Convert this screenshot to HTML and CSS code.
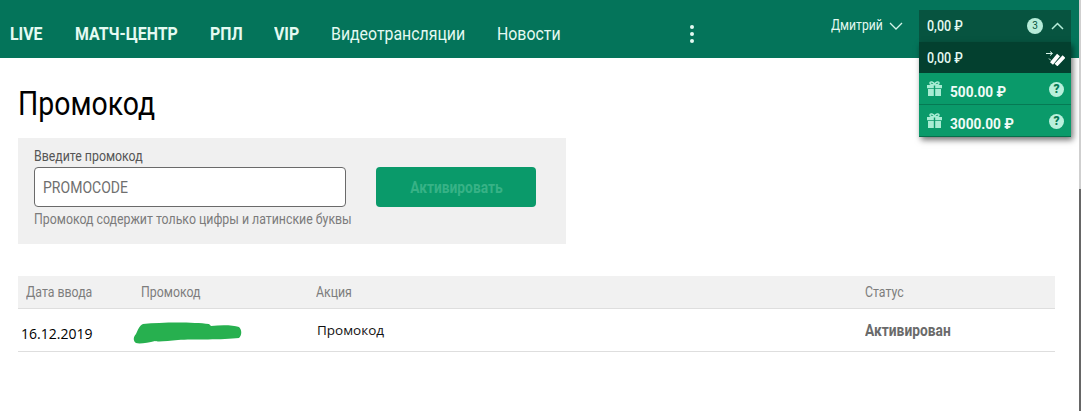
FILE: index.html
```html
<!DOCTYPE html>
<html lang="ru">
<head>
<meta charset="utf-8">
<title>Промокод</title>
<link rel="stylesheet" href="styles.css">
</head>
<body>
<div class="scroll-strip"><div class="scroll-thumb"></div></div>
<header class="topbar">
  <nav class="nav">
    <a class="nav-item strong"><span class="cond">LIVE</span></a>
    <a class="nav-item strong"><span class="cond">МАТЧ-ЦЕНТР</span></a>
    <a class="nav-item strong"><span class="cond">РПЛ</span></a>
    <a class="nav-item strong"><span class="cond">VIP</span></a>
    <a class="nav-item"><span class="cond">Видеотрансляции</span></a>
    <a class="nav-item"><span class="cond">Новости</span></a>
    <span class="dots"><i></i><i></i><i></i></span>
  </nav>
  <div class="user"><span class="cond">Дмитрий</span>
    <svg class="chev" width="14" height="8" viewBox="0 0 14 8"><path d="M1 1l6 6 6-6" fill="none" stroke="#d5f5ea" stroke-width="1.300"/></svg>
  </div>
  <div class="wallet">
    <div class="wallet-head">
      <span class="cond">0,00 ₽</span>
      <span class="badge">3</span>
      <svg class="chev-up" width="13" height="8" viewBox="0 0 13 8"><path d="M1 7l5.500-5.500L12 7" fill="none" stroke="#b6ecd9" stroke-width="1.500"/></svg>
    </div>
    <div class="wallet-menu">
      <div class="wallet-row dark">
        <span class="cond">0,00 ₽</span>
        <svg class="transfer" width="19" height="16" viewBox="0 0 19 16"><path d="M0 3.500h6M4 1.500l2.500 2-2.500 2M3 8.500l2 2" fill="none" stroke="#d8f5ea" stroke-width="1"/><path d="M5.500 13.500L12.500 5M10 15L18 6.500" fill="none" stroke="#fff" stroke-width="3.800"/></svg>
      </div>
      <div class="wallet-row bonus">
        <svg class="gift" width="15" height="15" viewBox="0 0 15 15"><path d="M0 4h6.800v3.200H0zM8.200 4H15v3.200H8.200zM1 8h5.800v7H1zM8.200 8H14v7H8.200z" fill="#a8ecd3"/><path d="M7.500 3.800C5 3.800 3 3.200 3 1.900 3 .4 6.500.5 7.500 3.800zM7.500 3.800C10 3.800 12 3.200 12 1.900 12 .4 8.500.5 7.500 3.800z" fill="none" stroke="#a8ecd3" stroke-width="1.500"/></svg>
        <b class="amount"><span class="cond wide">500.00 ₽</span></b>
        <span class="help">?</span>
      </div>
      <div class="wallet-row bonus">
        <svg class="gift" width="15" height="15" viewBox="0 0 15 15"><path d="M0 4h6.800v3.200H0zM8.200 4H15v3.200H8.200zM1 8h5.800v7H1zM8.200 8H14v7H8.200z" fill="#a8ecd3"/><path d="M7.500 3.800C5 3.800 3 3.200 3 1.900 3 .4 6.500.5 7.500 3.800zM7.500 3.800C10 3.800 12 3.200 12 1.900 12 .4 8.500.5 7.500 3.800z" fill="none" stroke="#a8ecd3" stroke-width="1.500"/></svg>
        <b class="amount"><span class="cond wide">3000.00 ₽</span></b>
        <span class="help">?</span>
      </div>
    </div>
  </div>
</header>
<main class="page">
  <h1 class="title"><span class="cond">Промокод</span></h1>
  <section class="promo">
    <div class="promo-field">
      <label class="promo-label"><span class="cond">Введите промокод</span></label>
      <div class="input"><span class="cond">PROMOCODE</span></div>
      <p class="hint"><span class="cond">Промокод содержит только цифры и латинские буквы</span></p>
    </div>
    <button class="activate"><span class="cond">Активировать</span></button>
  </section>
  <div class="table">
    <div class="tr th">
      <div class="c1"><span class="cond">Дата ввода</span></div>
      <div class="c2"><span class="cond">Промокод</span></div>
      <div class="c3"><span class="cond">Акция</span></div>
      <div class="c4"><span class="cond">Статус</span></div>
    </div>
    <div class="tr td">
      <div class="c1 date">16.12.2019</div>
      <div class="c2"><svg class="redact" width="110" height="22" viewBox="0 0 110 22"><path d="M10 2C30 0 60 0 76 2l2 2C88 3 100 3 106 5c3 3 3 8 0 11-16 2-46 1-61 2-10 1-20 2-23 1-7 2-16 3-19 2-3-2-3-6 0-9C5 8 6 4 10 2z" fill="#27b04f"/></svg></div>
      <div class="c3 action">Промокод</div>
      <div class="c4 status"><span class="cond">Активирован</span></div>
    </div>
  </div>
</main>
</body>
</html>
```
FILE: styles.css
```css
html, body { margin: 0; padding: 0; }
body { width: 1081px; height: 411px; overflow: hidden; background: #fff; font-family: Roboto, "Liberation Sans", sans-serif; color: #000; position: relative; }
.cond { display: inline-block; transform: scaleX(.835); transform-origin: left center; white-space: nowrap; }
.cond.wide { transform: scaleX(.91); }
.hint .cond, .promo-label .cond, .th .cond, .input .cond { transform: scaleX(.85); }

.topbar { height: 58px; background: #04745a; display: flex; align-items: flex-start; color: #e4faf2; }
.nav { display: flex; align-items: center; height: 67px; padding-left: 10px; flex: 0 0 806px; box-sizing: border-box; font-size: 19px; }
.nav-item { color: #e4faf2; }
.nav-item:nth-child(1) { width: 65px; }
.nav-item:nth-child(2) { width: 135px; }
.nav-item:nth-child(3) { width: 64px; }
.nav-item:nth-child(4) { width: 57px; }
.nav-item:nth-child(5) { width: 166px; }
.nav-item:nth-child(6) { width: 193px; }
.strong { font-weight: 700; }
.dots { display: flex; flex-direction: column; gap: 3px; }
.dots i { width: 4px; height: 4px; border-radius: 50%; background: #e4faf2; display: block; }

.user { width: 113px; height: 50px; box-sizing: border-box; padding: 17px 0 0 25px; font-size: 14.500px; display: flex; align-items: flex-start; }
.user .cond { width: 58px; }
.chev { margin-top: 5px; }

.wallet { width: 152px; position: relative; }
.wallet-head { margin-top: 10px; height: 32px; background: #075440; display: flex; align-items: center; padding: 0 7px 0 8px; font-size: 15px; font-weight: 500; }
.wallet-head .cond { flex: 1; }
.badge { width: 16px; height: 16px; border-radius: 50%; background: #b6ecd9; color: #075440; font-size: 10px; font-weight: 400; line-height: 16px; text-align: center; margin-right: 8px; }
.wallet-menu { position: absolute; top: 42px; left: 0; width: 152px; box-shadow: 2px 3px 6px rgba(0,0,0,.55); z-index: 2; }
.wallet-row { display: flex; align-items: center; box-sizing: border-box; padding: 0 7px 0 8px; }
.wallet-row.dark { height: 31px; background: #03402f; font-size: 15px; font-weight: 500; color: #e4faf2; }
.wallet-row.dark .cond { flex: 1; }
.transfer { margin-right: -1px; }
.wallet-row.bonus { height: 32px; background: #0a9a6a; border-bottom: 1px solid #067a54; }
.wallet-row.bonus:last-child { border-bottom: 1px solid #046f4b; }
.gift { margin: -1px 8px 0 0; flex: none; }
.amount { flex: 1; font-size: 15px; font-weight: 700; color: #f0fbf7; white-space: nowrap; padding-top: 6px; }
.help { width: 15px; height: 15px; border-radius: 50%; background: #b9f0dc; color: #067a54; font-size: 12px; font-weight: 900; line-height: 15px; text-align: center; margin-top: 2px; }

.scroll-strip { position: absolute; right: 0; top: 0; width: 2px; height: 411px; background: #cfcfcf; z-index: 3; }
.scroll-thumb { margin-top: 189px; height: 222px; background: #666; }

.page { padding: 0 26px 0 18px; }
.title { margin: 0; padding: 24px 0 13px; height: 43px; font-size: 34px; line-height: 43px; font-weight: 400; }

.promo { width: 548px; height: 106px; background: #f0f0f0; box-sizing: border-box; padding: 11px 16px 0; display: flex; }
.promo-field { width: 342px; flex: none; }
.promo-label { display: block; font-size: 14.500px; line-height: 15px; margin-bottom: 3px; color: #555; }
.input { height: 38px; border: 1px solid #6a6a6a; border-radius: 4px; background: #fff; padding: 0 8px; display: flex; align-items: center; font-size: 16.500px; color: #6f6f6f; width: 294px; }
.hint { margin: 4px 0 0; font-size: 14.500px; line-height: 17px; color: #7b7b7b; }
.activate { margin-top: 18px; width: 160px; height: 40px; flex: none; border: 0; border-radius: 4px; background: #0a9a6a; color: #37b286; font-family: inherit; font-size: 16.500px; font-weight: 700; padding: 0; text-align: center; }
.activate .cond { transform-origin: center center; }

.table { margin-top: 32px; width: 1037px; }
.tr { display: flex; align-items: center; border-bottom: 1px solid #dedede; box-sizing: border-box; }
.th { height: 33px; background: #f1f1f1; font-size: 14.500px; color: #7d7d7d; }
.td { height: 43px; font-size: 14.500px; }
.c1 { width: 123px; padding-left: 8px; box-sizing: border-box; flex: none; }
.c2 { width: 175px; flex: none; }
.c3 { width: 549px; flex: none; }
.c4 { flex: 1; }
.date { font-family: "Open Sans", sans-serif; font-size: 14px; padding-left: 3px; margin-top: 7px; }
.action { font-family: "Open Sans", sans-serif; font-size: 13.500px; color: #111; padding-left: 1px; box-sizing: border-box; }
.status { font-weight: 700; color: #6a6a6a; font-size: 16.500px; }
.redact { display: block; margin: 6px 0 0 -8px; }
```
